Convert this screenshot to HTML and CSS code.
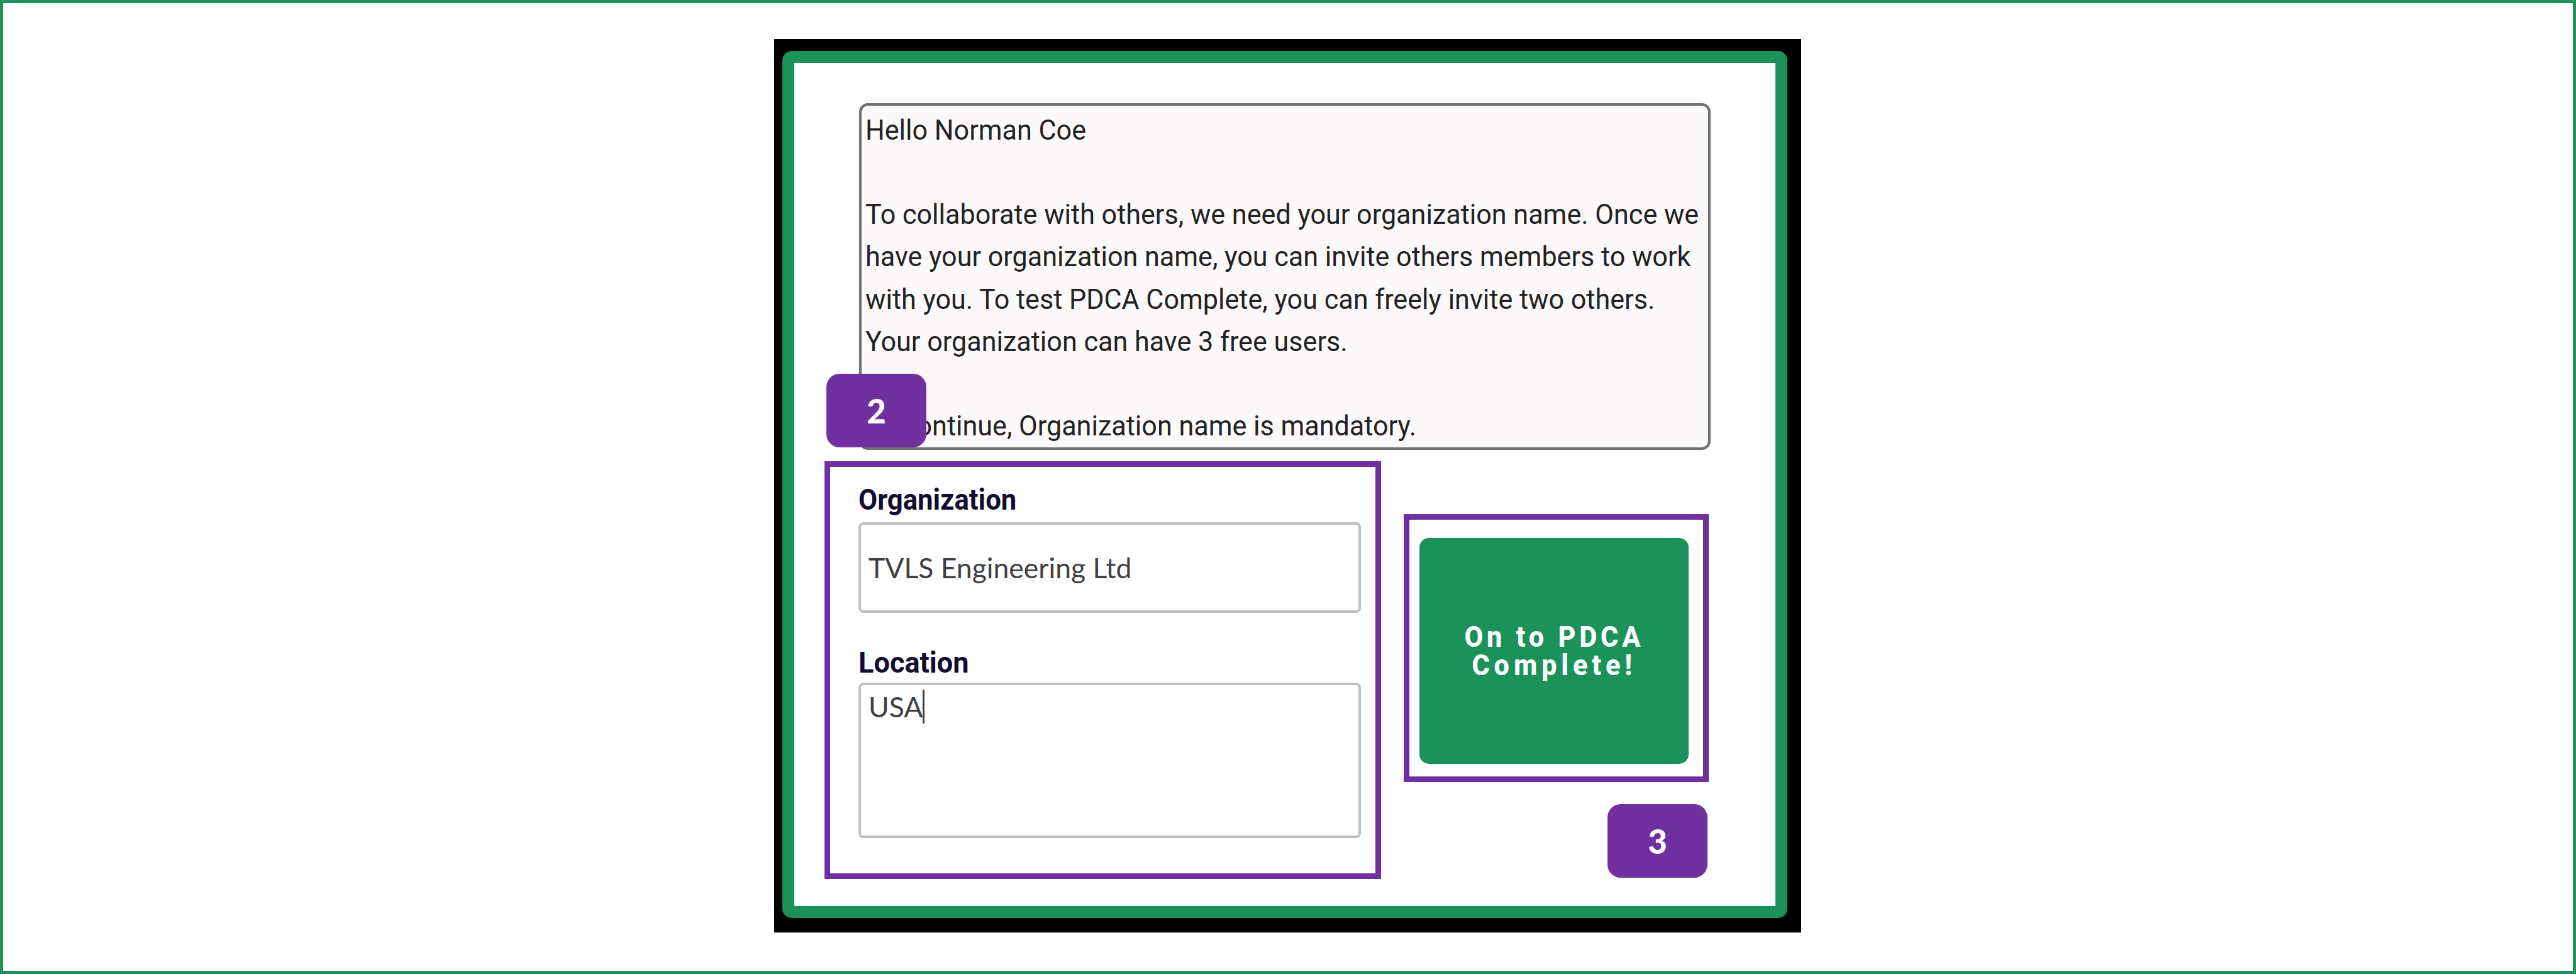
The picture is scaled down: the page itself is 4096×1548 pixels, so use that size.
FILE: index.html
```
<!DOCTYPE html>
<html lang="en">

<head>
  <meta charset="UTF-8" />
  <meta name="viewport" content="width=device-width, initial-scale=1.0" />
  <title>PDCA Complete</title>
  <link rel="stylesheet" href="styles.css">
</head>

<body>
  <div class="page">
    <div class="frame">
      <div class="panel">
        <div class="message">
          <p>Hello Norman Coe</p>
          <p>&nbsp;</p>
          <p>To collaborate with others, we need your organization name. Once we</p>
          <p>have your organization name, you can invite others members to work</p>
          <p>with you. To test PDCA Complete, you can freely invite two others.</p>
          <p>Your organization can have 3 free users.</p>
          <p>&nbsp;</p>
          <p>To continue, Organization name is mandatory.</p>
        </div>

        <div class="row">
          <div class="step step-form">
            <div class="label">Organization</div>
            <div class="field field-name">TVLS Engineering Ltd</div>
            <div class="label label-location">Location</div>
            <div class="field field-location">USA<span class="caret"></span></div>
          </div>
          <div class="step step-submit">
            <button class="submit"><span>On to PDCA</span><span class="second">Complete!</span></button>
          </div>
        </div>

        <!-- Step numbers -->
        <div class="badge badge-two">2</div>
        <div class="badge badge-three">3</div>
      </div>
    </div>
  </div>
</body>

</html>
```
FILE: styles.css
```
* {
  box-sizing: border-box;
}

body {
  margin: 0;
  background-color: #fff;
  font-family: Roboto, sans-serif;
}

.page {
  height: 1548px;
  padding: 57px 0 0 1226px;
  border: 5px solid #1b9259;
}

.frame {
  width: 1633px;
  height: 1420px;
  padding: 19px 22px 23px 13px;
  background-color: #000;
}

.panel {
  position: relative;
  height: 1378px;
  padding: 64px 0 0 48px;
  border: 19px solid #1b9259;
  border-radius: 15px;
  background-color: #fff;
}

.message {
  width: 1354px;
  height: 551px;
  margin-left: 55px;
  padding: 5px 0 0 6px;
  border: 4px solid #707070;
  border-radius: 14px;
  background-color: #fbf9fa;
  color: #222;
  font-size: 45px;
  line-height: 67.13px;
  white-space: nowrap;
}

.message p {
  margin: 0;
  transform: scaleX(0.958);
  transform-origin: left;
}

.row {
  display: flex;
  align-items: flex-start;
  gap: 36px;
  margin-top: 18px;
}

.step {
  border: 9px solid #7030a0;
}

.step-form {
  width: 885px;
  height: 664px;
  padding: 24px 0 0 45px;
}

.step-submit {
  width: 485px;
  height: 426px;
  margin-top: 84px;
  padding: 29px 16px;
}

.label {
  color: #120c2e;
  font-size: 47px;
  font-weight: 700;
  line-height: 56px;
  transform: scaleX(0.93);
  transform-origin: left;
}

.label-location {
  margin-top: 51px;
  transform: scaleX(0.96);
}

.field {
  width: 799px;
  border: 4px solid #bfbfbf;
  border-radius: 8px;
  color: #404040;
  font-family: Lato, sans-serif;
  font-size: 44.5px;
}

.field-name {
  height: 144px;
  margin-top: 8px;
  padding-left: 12px;
  line-height: 136px;
}

.field-location {
  display: flex;
  height: 247px;
  margin-top: 4px;
  padding: 7px 0 0 12px;
  line-height: 54px;
}

.caret {
  width: 3px;
  height: 54px;
  background-color: #404040;
}

.submit {
  display: flex;
  flex-direction: column;
  align-items: center;
  justify-content: center;
  width: 428px;
  height: 359px;
  padding: 0;
  border: none;
  border-radius: 15px;
  background-color: #1b9259;
  color: #fff;
  font-family: Roboto, sans-serif;
  font-size: 47px;
  font-weight: 800;
  letter-spacing: 6.3px;
  line-height: 44.4px;
}

.submit span {
  transform: scaleX(0.92);
}

.submit .second {
  letter-spacing: 7.5px;
}

.badge {
  position: absolute;
  width: 159px;
  height: 117px;
  border-radius: 21px;
  background-color: #7030a0;
  color: #fff;
  font-family: Lato, sans-serif;
  font-size: 53px;
  font-weight: 900;
  line-height: 117px;
  text-align: center;
}

.badge-two {
  top: 494px;
  left: 51px;
}

.badge-three {
  top: 1178px;
  left: 1293px;
}
```
